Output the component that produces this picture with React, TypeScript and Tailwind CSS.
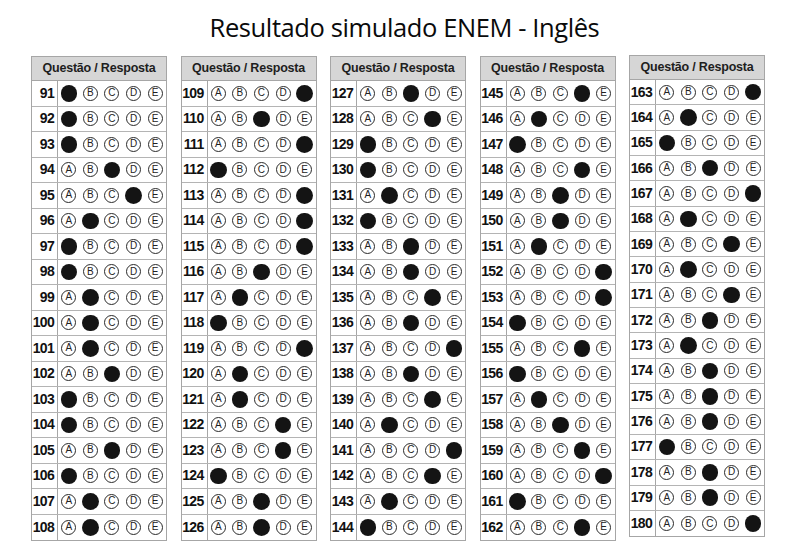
const columns: { start: number; answers: string }[] = [
  { start: 91, answers: "AAACDBAABBBCAACABB" },
  { start: 109, answers: "ECEAEEECBAEBBDDACC" },
  { start: 127, answers: "CDAABACCDCECDBEDBA" },
  { start: 145, answers: "DBADCCBEEADABCDEAD" },
  { start: 163, answers: "EBACEBDBDCBCCCACCE" },
]

const letters = ["A", "B", "C", "D", "E"]

function Bubble({ letter, filled }: { letter: string; filled: boolean }) {
  if (filled) {
    return <span className="w-[16.5px] h-[16.5px] rounded-full bg-[#141414]" />
  }
  return (
    <span className="w-[15px] h-[15px] rounded-full border border-[#2a2a2a] flex items-center justify-center text-[10px] leading-none text-[#222]">
      {letter}
    </span>
  )
}

function Sheet({ start, answers, shifted }: { start: number; answers: string; shifted?: boolean }) {
  return (
    <div className={`w-[136px] border border-[#a6a6a6] bg-white ${shifted ? "-mt-[1px]" : ""}`}>
      <div className="h-[24px] bg-[#d6d6d6] border-b border-[#a6a6a6] flex items-center justify-center text-[12.5px] font-bold tracking-[-0.2px] text-[#1e1e1e]">
        Questão / Resposta
      </div>
      {answers.split("").map((ans, i) => (
        <div
          key={i}
          className={`flex ${shifted ? "h-[25.35px]" : "h-[25.5px]"} ${i < answers.length - 1 ? "border-b border-[#b4b4b4]" : ""}`}
        >
          <div className="w-[26px] border-r border-[#a6a6a6] flex items-center justify-end pr-[3px] text-[14px] font-bold tracking-[-0.7px] text-[#111]">
            {start + i}
          </div>
          <div className="flex-1 grid grid-cols-5">
            {letters.map((l) => (
              <div key={l} className="flex items-center justify-center">
                <Bubble letter={l} filled={l === ans} />
              </div>
            ))}
          </div>
        </div>
      ))}
    </div>
  )
}

export default function App() {
  return (
    <div className="w-[809px] h-[549px] bg-white font-['Liberation_Sans',Arial,sans-serif] overflow-hidden">
      <h1 className="pt-[10px] text-center font-['Open_Sans',sans-serif] text-[25.5px] leading-[35px] text-[#0a0a0a] tracking-[-0.4px]">
        Resultado simulado ENEM - Inglês
      </h1>
      <div className="flex items-start gap-[13.5px] pl-[31px] mt-[11px]">
        {columns.map((c, i) => (
          <Sheet key={c.start} start={c.start} answers={c.answers} shifted={i === 4} />
        ))}
      </div>
    </div>
  )
}
